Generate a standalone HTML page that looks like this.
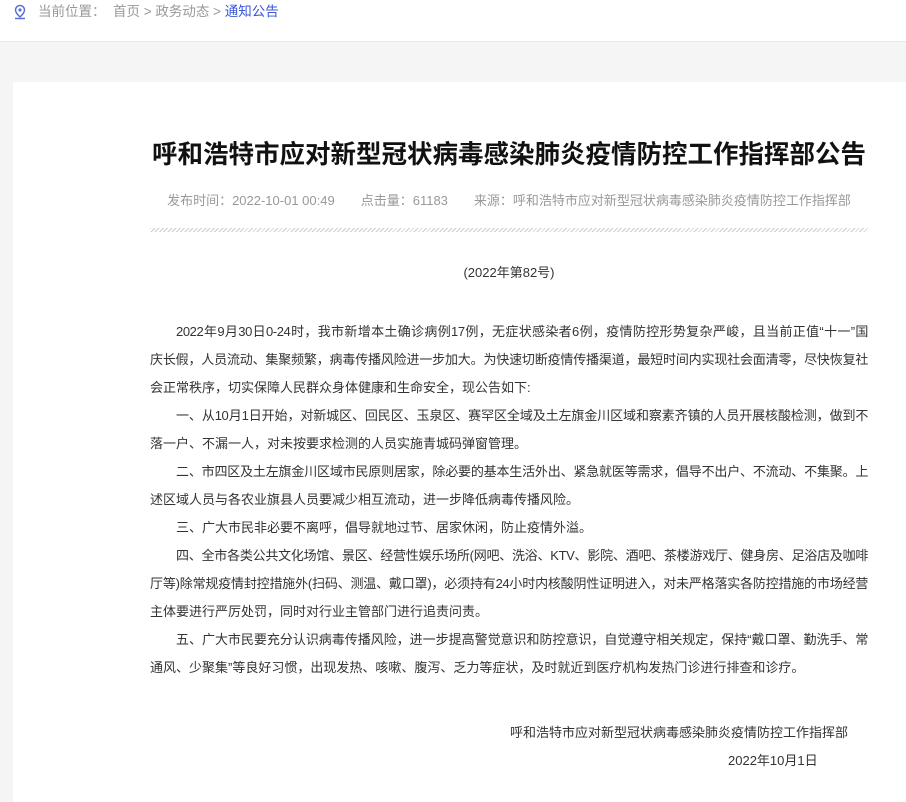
<!DOCTYPE html>
<html><head><meta charset="utf-8"><style>
body{margin:0;width:906px;height:779px;overflow:hidden;background:#f5f5f5;font-family:"Liberation Sans","Noto Sans CJK SC",sans-serif;}
.top{height:41px;background:#fff;border-bottom:1px solid #e8e8e8;position:relative;}
.bc{position:absolute;left:38px;top:3px;font-size:13.5px;color:#999;line-height:18px;}
.bc .cur{color:#3b57d6}
.card{position:absolute;left:13px;top:82px;width:893px;height:720px;background:#fff;}
h1{position:absolute;left:137px;width:718px;top:56px;margin:0;text-align:center;font-size:25.5px;font-weight:bold;color:#111;line-height:34px;white-space:nowrap}
.meta{position:absolute;left:137px;width:718px;top:110px;text-align:center;font-size:13px;color:#999;line-height:18px;white-space:nowrap}
.meta span{margin:0 13px}
.hatch{position:absolute;left:137px;width:718px;top:146px;height:4px;background:repeating-linear-gradient(135deg,#ccc 0 1px,transparent 1px 3px);}
.no{position:absolute;left:137px;width:718px;top:180px;text-align:center;font-size:13px;color:#333}
.txt{position:absolute;left:137px;width:718px;top:236px;font-size:13px;color:#333;letter-spacing:-0.4px}
.txt div{width:718px;height:28px;line-height:28px;text-align:justify;text-align-last:justify;white-space:nowrap;overflow:hidden}
.txt div.l{text-align-last:left;letter-spacing:0}
.txt div.i{padding-left:26px;width:692px}
.sig{position:absolute;left:497px;top:640px;font-size:13px;color:#333}
.date{position:absolute;left:715px;top:668px;font-size:13px;color:#333}
</style></head><body>
<div class="top">
<svg style="position:absolute;left:13px;top:4px" width="14" height="16" viewBox="0 0 14 16"><path d="M7 1.5a4.5 4.5 0 0 0-4.5 4.5c0 3 4.5 7 4.5 7s4.5-4 4.5-7A4.5 4.5 0 0 0 7 1.5z" fill="none" stroke="#5a6fd8" stroke-width="1.5"/><circle cx="7" cy="6" r="1.6" fill="#5a6fd8"/><path d="M2 14.5h10" stroke="#5a6fd8" stroke-width="1.5"/></svg>
<div class="bc">当前位置：&nbsp;&nbsp;首页 &gt; 政务动态 &gt; <span class="cur">通知公告</span></div>
</div>
<div class="card">
<h1>呼和浩特市应对新型冠状病毒感染肺炎疫情防控工作指挥部公告</h1>
<div class="meta"><span>发布时间：2022-10-01 00:49</span><span>点击量：61183</span><span>来源：呼和浩特市应对新型冠状病毒感染肺炎疫情防控工作指挥部</span></div>
<div class="hatch"></div>
<div class="no">(2022年第82号)</div>
<div class="txt">
<div class="i">2022年9月30日0-24时，我市新增本土确诊病例17例，无症状感染者6例，疫情防控形势复杂严峻，且当前正值“十一”国</div>
<div>庆长假，人员流动、集聚频繁，病毒传播风险进一步加大。为快速切断疫情传播渠道，最短时间内实现社会面清零，尽快恢复社</div>
<div class="l">会正常秩序，切实保障人民群众身体健康和生命安全，现公告如下:</div>
<div class="i">一、从10月1日开始，对新城区、回民区、玉泉区、赛罕区全域及土左旗金川区域和察素齐镇的人员开展核酸检测，做到不</div>
<div class="l">落一户、不漏一人，对未按要求检测的人员实施青城码弹窗管理。</div>
<div class="i">二、市四区及土左旗金川区域市民原则居家，除必要的基本生活外出、紧急就医等需求，倡导不出户、不流动、不集聚。上</div>
<div class="l">述区域人员与各农业旗县人员要减少相互流动，进一步降低病毒传播风险。</div>
<div class="i l">三、广大市民非必要不离呼，倡导就地过节、居家休闲，防止疫情外溢。</div>
<div class="i">四、全市各类公共文化场馆、景区、经营性娱乐场所(网吧、洗浴、KTV、影院、酒吧、茶楼游戏厅、健身房、足浴店及咖啡</div>
<div>厅等)除常规疫情封控措施外(扫码、测温、戴口罩)，必须持有24小时内核酸阴性证明进入，对未严格落实各防控措施的市场经营</div>
<div class="l">主体要进行严厉处罚，同时对行业主管部门进行追责问责。</div>
<div class="i">五、广大市民要充分认识病毒传播风险，进一步提高警觉意识和防控意识，自觉遵守相关规定，保持“戴口罩、勤洗手、常</div>
<div class="l">通风、少聚集”等良好习惯，出现发热、咳嗽、腹泻、乏力等症状，及时就近到医疗机构发热门诊进行排查和诊疗。</div>
</div>
<div class="sig">呼和浩特市应对新型冠状病毒感染肺炎疫情防控工作指挥部</div>
<div class="date">2022年10月1日</div>
</div>
</body></html>
